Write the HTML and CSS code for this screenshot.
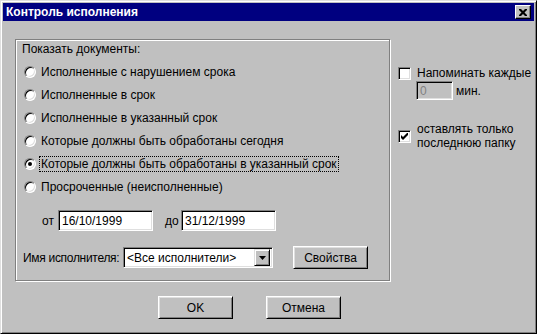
FILE: index.html
```html
<!DOCTYPE html>
<html>
<head>
    <meta charset="utf-8">
    <title>Контроль исполнения</title>
    <link rel="stylesheet" href="styles.css">
</head>
<body>
    <div class="window">
        <div class="titlebar">
            <span class="title">Контроль исполнения</span>
            <span class="close-btn">
                <svg width="8" height="7" viewBox="0 0 8 7"><path d="M0 0h2l2 2 2-2h2v1l-2.5 2.5L8 6v1H6L4 5 2 7H0V6l2.5-2.5L0 1z" fill="#000"/></svg>
            </span>
        </div>

        <div class="main">
            <div class="group">
                <div class="group-label">Показать документы:</div>

                <div class="radio-row"><span class="radio"></span><span class="radio-text">Исполненные с нарушением срока</span></div>
                <div class="radio-row"><span class="radio"></span><span class="radio-text">Исполненные в срок</span></div>
                <div class="radio-row"><span class="radio"></span><span class="radio-text">Исполненные в указанный срок</span></div>
                <div class="radio-row"><span class="radio"></span><span class="radio-text">Которые должны быть обработаны сегодня</span></div>
                <div class="radio-row"><span class="radio checked"></span><span class="radio-text focused">Которые должны быть обработаны в указанный срок</span></div>
                <div class="radio-row"><span class="radio"></span><span class="radio-text">Просроченные (неисполненные)</span></div>

                <div class="date-row">
                    <span class="date-label">от</span>
                    <span class="field date-field">16/10/1999</span>
                    <span class="date-label to">до</span>
                    <span class="field date-field">31/12/1999</span>
                </div>

                <div class="user-row">
                    <span class="user-label">Имя исполнителя:</span>
                    <span class="field combo">
                        <span class="combo-text">&lt;Все исполнители&gt;</span>
                        <span class="combo-btn"><svg width="7" height="4" viewBox="0 0 7 4"><path d="M0 0h7L3.5 4z" fill="#000"/></svg></span>
                    </span>
                    <span class="button props-btn">Свойства</span>
                </div>
            </div>

            <div class="side">
                <div class="check-row">
                    <span class="checkbox"></span>
                    <span class="check-text">Напоминать каждые</span>
                </div>
                <div class="remind-row">
                    <span class="field disabled-field">0</span>
                    <span class="min-text">мин.</span>
                </div>
                <div class="check-row two-line">
                    <span class="checkbox">
                        <svg width="7" height="7" viewBox="0 0 7 7"><path d="M0 2v3l2 2 5-5V-1L2 4z" fill="#000"/></svg>
                    </span>
                    <span class="check-text">оставлять только<br>последнюю папку</span>
                </div>
            </div>
        </div>

        <div class="footer">
            <span class="button dlg-btn">OK</span>
            <span class="button dlg-btn">Отмена</span>
        </div>
    </div>
</body>
</html>
```

FILE: styles.css
```css
body {
    margin: 0;
    font-family: "Liberation Sans", Arial, sans-serif;
    font-size: 12px;
    color: #000;
    background-color: #c0c0c0;
}
.window {
    box-sizing: border-box;
    width: 537px;
    height: 334px;
    padding: 2px;
    background-color: #c0c0c0;
    border: 1px solid;
    border-color: #dfdfdf #000 #000 #dfdfdf;
    box-shadow: inset 1px 1px #fff, inset -1px -1px #808080;
}
.titlebar {
    height: 18px;
    background-color: #000080;
    display: flex;
    align-items: center;
    justify-content: space-between;
    padding: 0 3px 0 3px;
}
.title {
    color: #fff;
    font-weight: bold;
    font-size: 12px;
}
.close-btn {
    box-sizing: border-box;
    width: 16px;
    height: 14px;
    background-color: #c0c0c0;
    border: 1px solid;
    border-color: #fff #000 #000 #fff;
    box-shadow: inset -1px -1px #808080;
    display: flex;
    align-items: center;
    justify-content: center;
}
.main {
    display: flex;
    margin-top: 18px;
    padding-left: 12px;
}
.group {
    box-sizing: border-box;
    flex-shrink: 0;
    width: 375px;
    height: 242px;
    border: 1px solid #808080;
    box-shadow: inset 1px 1px #fff, 1px 1px #fff;
    padding: 2px 0 0 6px;
}
.group-label {
    line-height: 14px;
    margin-bottom: 4px;
}
.radio-row {
    display: flex;
    align-items: center;
    height: 23px;
}
.radio {
    box-sizing: border-box;
    width: 12px;
    height: 12px;
    margin-left: 2px;
    margin-right: 4px;
    border-radius: 50%;
    background-color: #fff;
    border: 1px solid;
    border-color: #808080 #fff #fff #808080;
    box-shadow: inset 1px 1px #000, inset -1px -1px #dfdfdf;
    position: relative;
}
.radio.checked::after {
    content: "";
    position: absolute;
    left: 3px;
    top: 3px;
    width: 4px;
    height: 4px;
    border-radius: 50%;
    background-color: #000;
}
.radio-text {
    padding: 0 1px;
    line-height: 14px;
}
.radio-text.focused {
    outline: 1px dotted #000;
    outline-offset: 0;
}
.date-row {
    display: flex;
    align-items: center;
    margin-top: 12px;
    height: 21px;
}
.date-label {
    margin-left: 20px;
    width: 16px;
}
.date-label.to {
    margin-left: 12px;
}
.field {
    box-sizing: border-box;
    flex-shrink: 0;
    height: 21px;
    background-color: #fff;
    border: 1px solid;
    border-color: #808080 #fff #fff #808080;
    box-shadow: inset 1px 1px #000, inset -1px -1px #dfdfdf;
    display: flex;
    align-items: center;
    padding-left: 3px;
}
.date-field {
    width: 95px;
}
.user-row {
    display: flex;
    align-items: center;
    margin-top: 15px;
}
.user-label {
    flex-shrink: 0;
    white-space: nowrap;
    letter-spacing: -0.3px;
    margin-left: 1px;
    width: 100px;
}
.combo {
    width: 150px;
    padding-right: 2px;
    justify-content: space-between;
}
.combo-btn {
    box-sizing: border-box;
    width: 16px;
    height: 17px;
    background-color: #c0c0c0;
    border: 1px solid;
    border-color: #dfdfdf #000 #000 #dfdfdf;
    box-shadow: inset 1px 1px #fff, inset -1px -1px #808080;
    display: flex;
    align-items: center;
    justify-content: center;
}
.button {
    box-sizing: border-box;
    flex-shrink: 0;
    height: 23px;
    background-color: #c0c0c0;
    border: 1px solid;
    border-color: #fff #000 #000 #fff;
    box-shadow: inset 1px 1px #dfdfdf, inset -1px -1px #808080;
    display: flex;
    align-items: center;
    justify-content: center;
}
.props-btn {
    width: 75px;
    margin-left: 20px;
}
.side {
    margin-left: 8px;
    padding-top: 27px;
}
.check-row {
    display: flex;
    align-items: center;
}
.checkbox {
    box-sizing: border-box;
    flex-shrink: 0;
    width: 13px;
    height: 13px;
    background-color: #fff;
    border: 1px solid;
    border-color: #808080 #fff #fff #808080;
    box-shadow: inset 1px 1px #000, inset -1px -1px #dfdfdf;
    margin-right: 6px;
    display: flex;
    align-items: center;
    justify-content: center;
}
.check-text {
    line-height: 14px;
    white-space: nowrap;
}
.remind-row {
    display: flex;
    align-items: center;
    margin-top: 1px;
    padding-left: 18px;
}
.disabled-field {
    width: 37px;
    height: 19px;
    background-color: #c0c0c0;
    color: #808080;
}
.min-text {
    margin-left: 3px;
}
.two-line {
    margin-top: 22px;
}
.footer {
    display: flex;
    gap: 33px;
    margin-top: 15px;
    padding-left: 155px;
}
.dlg-btn {
    width: 75px;
}
```
